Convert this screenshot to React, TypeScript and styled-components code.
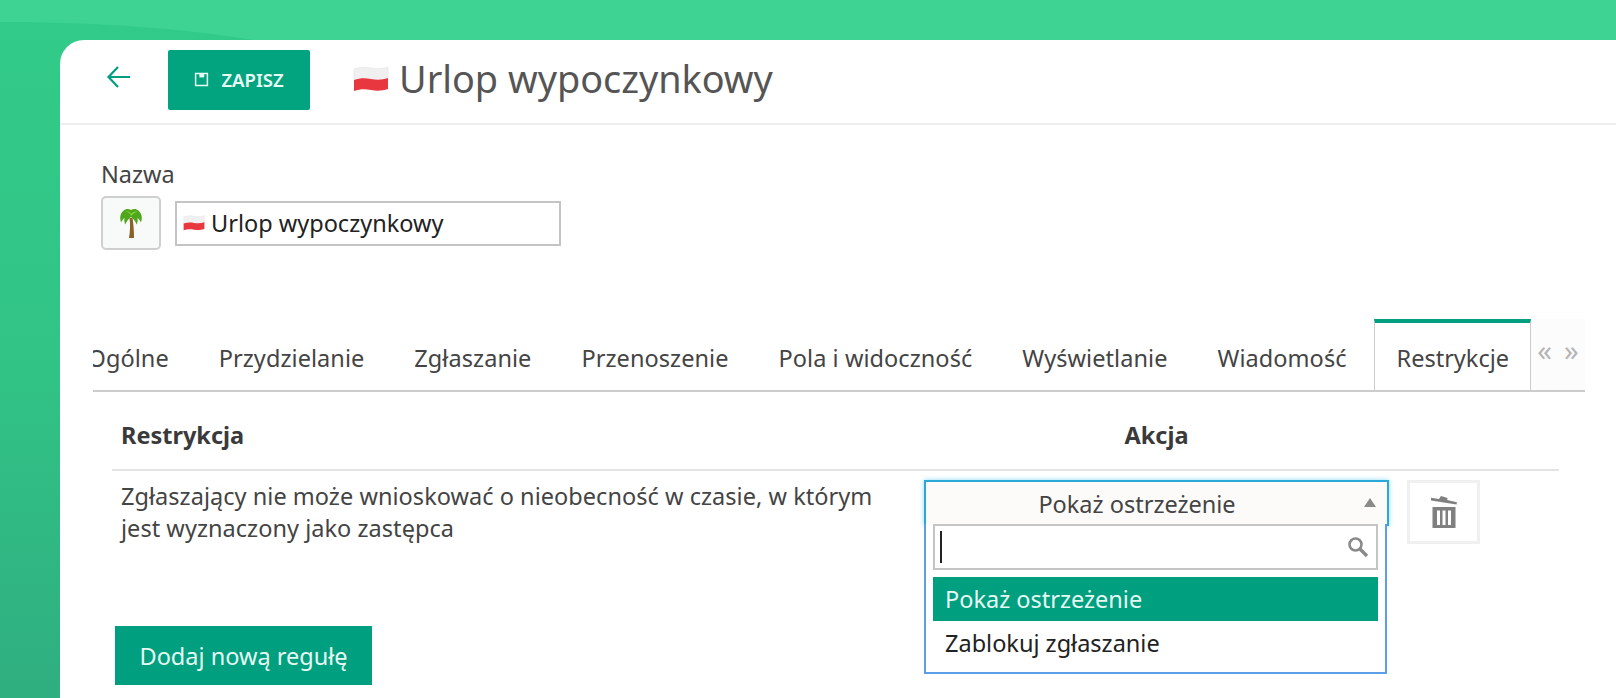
import styled, { createGlobalStyle } from "styled-components";

const GREEN = "#009f7f";

const Global = createGlobalStyle`
  html, body {
    margin: 0;
    height: 698px;
    overflow: hidden;
    font-family: "Noto Sans", "Open Sans", sans-serif;
    color: #3d3d3d;
  }
  * { box-sizing: border-box; }
`;

const Page = styled.div`
  position: relative;
  height: 698px;
  padding: 40px 0 0 60px;
  overflow: hidden;
  background: linear-gradient(180deg, #32cb89 0%, #31c486 50%, #2fae80 100%);
`;

const Wave = styled.svg`
  position: absolute;
  top: 0;
  left: 0;
`;

const Panel = styled.main`
  position: relative;
  height: 700px;
  background: #fff;
  border-radius: 24px 0 0 0;
`;

const Header = styled.header`
  display: flex;
  align-items: center;
  height: 85px;
  padding: 0 0 0 46px;
  border-bottom: 2px solid #eeeeee;
`;

const BackButton = styled.button`
  display: flex;
  width: 26px;
  height: 26px;
  padding: 0;
  margin-right: 36px;
  margin-top: -10px;
  border: 0;
  background: none;
  color: ${GREEN};
`;

const SaveButton = styled.button`
  display: flex;
  align-items: center;
  justify-content: center;
  gap: 12px;
  width: 142px;
  height: 60px;
  margin-top: -4px;
  margin-right: 43px;
  border: 0;
  border-radius: 2px;
  background: #02a480;
  color: #e9fbf5;
  font: 600 18.5px "Noto Sans", sans-serif;
`;

const Title = styled.h1`
  display: flex;
  align-items: center;
  gap: 10px;
  margin: -5px 0 0;
  color: #555555;
  font-size: 37.8px;
  font-weight: 400;
  line-height: 48px;
`;

const Content = styled.div`
  padding: 32px 0 0 41px;
`;

const Label = styled.label`
  display: block;
  margin-bottom: 5px;
  font-size: 23.5px;
  line-height: 34px;
  color: #444;
`;

const NameRow = styled.div`
  display: flex;
  align-items: center;
  gap: 14px;
`;

const EmojiButton = styled.button`
  display: flex;
  align-items: center;
  justify-content: center;
  width: 60px;
  height: 54px;
  padding: 0;
  border: 2px solid #cfcfcf;
  border-radius: 5px;
  background: #f8f9f9;
`;

const NameField = styled.div`
  display: flex;
  align-items: center;
  gap: 6px;
  width: 386px;
  height: 45px;
  padding: 0 6px;
  border: 2px solid #c4c4c4;
  color: #222;
  font-size: 23.5px;
`;

const TabBar = styled.nav`
  display: flex;
  height: 73px;
  margin: 69px 31px 0 -8px;
`;

const TabList = styled.div`
  display: flex;
  flex: 1;
  justify-content: flex-end;
  min-width: 0;
  overflow: hidden;
  border-bottom: 2px solid #cccccc;
`;

const Tab = styled.div<{ $active?: boolean }>`
  flex: none;
  margin-left: ${({ $active }) => ($active ? "2px" : "0")};
  padding: ${({ $active }) => ($active ? "19px 21px 0 22px" : "23px 25px 0")};
  font-size: 23.5px;
  letter-spacing: ${({ $active }) => ($active ? "0" : "0.06px")};
  line-height: 32px;
  white-space: nowrap;
  color: #444;
  ${({ $active }) =>
    $active &&
    `
    background: #fff;
    border: 1px solid #cccccc;
    border-top: 4px solid ${GREEN};
    border-bottom: 0;
  `}
`;

const TabArrows = styled.div`
  display: flex;
  justify-content: center;
  flex: none;
  gap: 12px;
  width: 54px;
  padding-top: 19px;
  border-bottom: 2px solid #cccccc;
  background: #fcfcfc;
  color: #b5b5b5;
  font-size: 29px;
  line-height: 24px;
`;

const Table = styled.div`
  display: grid;
  grid-template-columns: 812px 465px auto;
  align-items: start;
  margin: 0 57px 0 11px;
`;

const HeadCell = styled.div<{ $center?: boolean }>`
  height: 79px;
  padding: 27px 0 0 ${({ $center }) => ($center ? "0" : "9px")};
  border-bottom: 2px solid #e4e4e4;
  font-size: 23.5px;
  font-weight: 700;
  line-height: 32px;
  color: #3a3a3a;
  text-align: ${({ $center }) => ($center ? "center" : "left")};
`;

const RuleText = styled.div`
  padding: 9px 40px 0 9px;
  font-size: 23.5px;
  letter-spacing: 0.04px;
  line-height: 32px;
  color: #444;
`;

const SelectWrap = styled.div`
  position: relative;
  margin-top: 9px;
`;

const SelectBox = styled.div`
  position: relative;
  height: 46px;
  padding: 6px 39px 0 0;
  border: 2px solid #2aa9d8;
  border-bottom: 0;
  box-shadow: 0 0 5px #8fdcf5;
  background: #fcfbf9;
  font-size: 23.5px;
  line-height: 32px;
  text-align: center;
  color: #444;
`;

const Caret = styled.span`
  position: absolute;
  top: 16px;
  right: 11px;
  border-left: 6px solid transparent;
  border-right: 6px solid transparent;
  border-bottom: 9px solid #8a8a8a;
`;

const Dropdown = styled.div`
  position: absolute;
  top: 44px;
  left: 0;
  width: 463px;
  height: 150px;
  padding: 0 7px;
  border: 2px solid #5c9fe8;
  border-top: 0;
  background: #fff;
`;

const SearchBox = styled.div`
  display: flex;
  align-items: center;
  justify-content: space-between;
  height: 46px;
  margin-bottom: 7px;
  padding: 0 7px 0 5px;
  border: 2px solid #c4c4c4;
  color: #8a8a8a;
`;

const TextCaret = styled.span`
  width: 2px;
  height: 32px;
  background: #222;
`;

const Option = styled.div<{ $selected?: boolean }>`
  height: 44px;
  padding-left: 12px;
  font-size: 23.5px;
  line-height: 44px;
  background: ${({ $selected }) => ($selected ? GREEN : "transparent")};
  color: ${({ $selected }) => ($selected ? "#e6f9f3" : "#222")};
`;

const TrashButton = styled.button`
  display: flex;
  align-items: center;
  justify-content: center;
  width: 73px;
  height: 64px;
  margin: 9px 0 0 18px;
  padding: 0;
  border: 3px solid #f0f0f0;
  background: #fff;
  color: #808080;
`;

const AddButton = styled.button`
  display: block;
  width: 257px;
  height: 59px;
  margin: 82px 0 0 14px;
  border: 0;
  background: ${GREEN};
  color: #e6f9f3;
  font: 400 23.5px "Noto Sans", sans-serif;
`;

const PolishFlag = ({ width }: { width: number }) => (
  <svg width={width} height={(width * 26) / 36} viewBox="0 0 36 26">
    <path
      d="M1 3c6-2 11-2 17-1s11 1 17-1v12c-6 2-11 2-17 1S7 13 1 15z"
      fill="#f0f0f0"
      stroke="#e2e2e2"
      strokeWidth=".6"
    />
    <path
      d="M1 14c6-2 11-2 17-1s11 1 17-1v11c-6 2-11 2-17 1s-11-1-17 1z"
      fill="#e8373f"
    />
  </svg>
);

const PalmIcon = () => (
  <svg width="24" height="31" viewBox="0 0 24 31">
    <path d="M10.500 10c1 6 .5 14-.5 20h5c0-7-.5-14-1.500-20z" fill="#8a6226" />
    <path
      d="M12 2C8-.5 3 2 1.500 7.500c-.6 2.500-.2 5 .6 7C3 12.500 4 11 5.500 10c-.5 2.500 0 5 .8 6.500C7.500 13.500 9.500 10.500 12 9c2.500 1.500 4.500 4.500 5.700 7.500.8-1.500 1.300-4 .8-6.500 1.500 1 2.500 2.500 3.400 4.500.8-2 1.200-4.500.6-7C21 2 16-.5 12 2z"
      fill="#4fa81c"
    />
    <path d="M6 3c3 0 5 1 6 3 2-2 4-3 6.500-2-3 0-4.500 2-6.500 4-1-3-3-4-6-5z" fill="#8ed63c" />
  </svg>
);

const SaveIcon = () => (
  <svg width="15" height="15" viewBox="0 0 14 14" fill="none" stroke="currentColor">
    <path d="M1.500 1.500h11v11h-11z" strokeWidth="1.400" />
    <path d="M5 1.500v3.500h4.500v-3.500" fill="currentColor" stroke="none" />
  </svg>
);

const BackIcon = () => (
  <svg width="26" height="26" viewBox="0 0 26 26" fill="none" stroke="currentColor" strokeWidth="2.200">
    <path d="M24 13H3M12 3 2.500 13l9.500 10" />
  </svg>
);

const SearchIcon = () => (
  <svg width="22" height="22" viewBox="0 0 22 22" fill="none" stroke="currentColor">
    <circle cx="8.500" cy="8.500" r="6" strokeWidth="2.600" />
    <path d="m13 13 7 7" strokeWidth="3.400" />
  </svg>
);

const TrashIcon = () => (
  <svg width="26" height="33" viewBox="0 0 26 33" fill="currentColor">
    <path d="M0 1.800 8 3l2-3 6.500 2-.3 2 9.800 2.200-.5 2.300L0 4.500z" />
    <path d="M1.500 11h23v21h-23zM6 14.500V29h3V14.500zm5.500 0V29h3V14.500zm5.500 0V29h3V14.500z" fillRule="evenodd" />
  </svg>
);

const tabs = [
  "Ogólne",
  "Przydzielanie",
  "Zgłaszanie",
  "Przenoszenie",
  "Pola i widoczność",
  "Wyświetlanie",
  "Wiadomość",
];

export default function App() {
  return (
    <Page>
      <Global />
      <Wave width="1616" height="60" viewBox="0 0 1616 60">
        <path d="M0 0h1616v60H340C260 35 140 22 0 22z" fill="#3fd393" />
      </Wave>
      <Panel>
        <Header>
          <BackButton aria-label="Wstecz">
            <BackIcon />
          </BackButton>
          <SaveButton>
            <SaveIcon />
            ZAPISZ
          </SaveButton>
          <Title>
            <PolishFlag width={36} />
            Urlop wypoczynkowy
          </Title>
        </Header>
        <Content>
          <Label>Nazwa</Label>
          <NameRow>
            <EmojiButton>
              <PalmIcon />
            </EmojiButton>
            <NameField>
              <PolishFlag width={22} />
              Urlop wypoczynkowy
            </NameField>
          </NameRow>
          <TabBar>
            <TabList>
              {tabs.map((tab) => (
                <Tab key={tab}>{tab}</Tab>
              ))}
              <Tab $active>Restrykcje</Tab>
            </TabList>
            <TabArrows>
              <span>«</span>
              <span>»</span>
            </TabArrows>
          </TabBar>
          <Table>
            <HeadCell>Restrykcja</HeadCell>
            <HeadCell $center>Akcja</HeadCell>
            <HeadCell />
            <RuleText>
              Zgłaszający nie może wnioskować o nieobecność w czasie, w którym
              jest wyznaczony jako zastępca
            </RuleText>
            <SelectWrap>
              <SelectBox>
                Pokaż ostrzeżenie
                <Caret />
              </SelectBox>
              <Dropdown>
                <SearchBox>
                  <TextCaret />
                  <SearchIcon />
                </SearchBox>
                <Option $selected>Pokaż ostrzeżenie</Option>
                <Option>Zablokuj zgłaszanie</Option>
              </Dropdown>
            </SelectWrap>
            <TrashButton aria-label="Usuń">
              <TrashIcon />
            </TrashButton>
          </Table>
          <AddButton>Dodaj nową regułę</AddButton>
        </Content>
      </Panel>
    </Page>
  );
}
